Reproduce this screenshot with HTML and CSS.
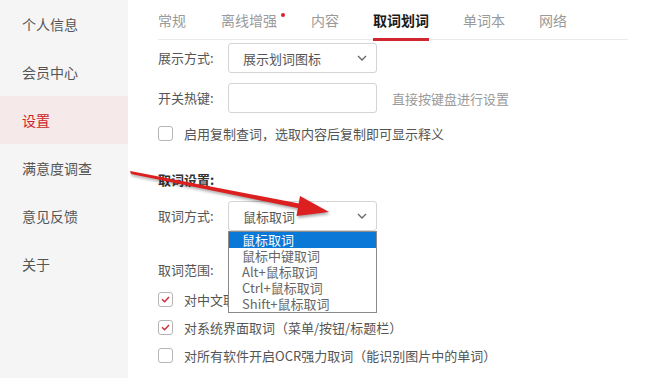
FILE: index.html
```html
<!DOCTYPE html>
<html lang="zh-CN">
<head>
<meta charset="utf-8">
<title>设置</title>
<link rel="stylesheet" href="styles.css">
</head>
<body>
<div class="app">
  <nav class="sidebar">
    <div class="side-item">个人信息</div>
    <div class="side-item">会员中心</div>
    <div class="side-item active">设置</div>
    <div class="side-item">满意度调查</div>
    <div class="side-item">意见反馈</div>
    <div class="side-item">关于</div>
  </nav>
  <main class="main">
    <div class="tabs">
      <div class="tab">常规</div>
      <div class="tab dot">离线增强</div>
      <div class="tab">内容</div>
      <div class="tab active">取词划词</div>
      <div class="tab">单词本</div>
      <div class="tab">网络</div>
    </div>

    <div class="row row-first">
      <div class="label">展示方式:</div>
      <div class="select">
        <span>展示划词图标</span>
        <svg class="chev" width="10" height="6" viewBox="0 0 10 6"><path d="M1 1l4 4 4-4" fill="none" stroke="#666" stroke-width="1.3"/></svg>
      </div>
    </div>

    <div class="row">
      <div class="label">开关热键:</div>
      <div class="input"></div>
      <div class="hint">直接按键盘进行设置</div>
    </div>

    <div class="check-row cr-first">
      <span class="box"></span>
      <span>启用复制查词，选取内容后复制即可显示释义</span>
    </div>

    <div class="section-title">取词设置:</div>

    <div class="row row-pick">
      <div class="label">取词方式:</div>
      <div class="select-wrap">
        <div class="select">
          <span>鼠标取词</span>
          <svg class="chev" width="10" height="6" viewBox="0 0 10 6"><path d="M1 1l4 4 4-4" fill="none" stroke="#666" stroke-width="1.3"/></svg>
        </div>
        <ul class="dropdown">
          <li class="sel">鼠标取词</li>
          <li>鼠标中键取词</li>
          <li>Alt+鼠标取词</li>
          <li>Ctrl+鼠标取词</li>
          <li>Shift+鼠标取词</li>
        </ul>
      </div>
    </div>

    <div class="label range">取词范围:</div>

    <div class="checks">
      <div class="check-row">
        <span class="box checked"><svg width="9" height="7" viewBox="0 0 9 7"><path d="M1 3.2l2.6 2.5L8 1" fill="none" stroke="#c8303a" stroke-width="1.5"/></svg></span>
        <span>对中文取词</span>
      </div>
      <div class="check-row">
        <span class="box checked"><svg width="9" height="7" viewBox="0 0 9 7"><path d="M1 3.2l2.6 2.5L8 1" fill="none" stroke="#c8303a" stroke-width="1.5"/></svg></span>
        <span>对系统界面取词（菜单/按钮/标题栏）</span>
      </div>
      <div class="check-row">
        <span class="box"></span>
        <span>对所有软件开启OCR强力取词（能识别图片中的单词）</span>
      </div>
    </div>
  </main>
</div>
<svg class="arrow" width="659" height="378" viewBox="0 0 659 378">
  <polygon points="130,171 131,174 300,208.5 299,203.5" fill="#dc1f1f"/>
  <polygon points="329,212 300,196 296.5,216" fill="#dc1f1f"/>
</svg>
</body>
</html>
```

FILE: styles.css
```css
* { box-sizing: border-box; }
html, body { margin: 0; padding: 0; }
body {
  width: 659px;
  height: 378px;
  overflow: hidden;
  position: relative;
  background: #fff;
  font-family: "Noto Sans CJK SC", "Microsoft YaHei", sans-serif;
  color: #555;
}
.app {
  display: flex;
  height: 378px;
}
.sidebar {
  width: 128px;
  flex: none;
  background: #f5f5f5;
}
.side-item {
  height: 48px;
  line-height: 48px;
  padding-left: 22px;
  font-size: 14px;
  color: #555;
}
.side-item.active {
  background: #f6e9e9;
  color: #cc1f28;
}
.main {
  flex: 1;
  padding: 0 31px 0 30px;
  font-size: 13px;
}
.tabs {
  display: flex;
  height: 40px;
  border-bottom: 1px solid #ebebeb;
}
.tab {
  position: relative;
  font-size: 14px;
  line-height: 40px;
  height: 40px;
  color: #9a9a9a;
  margin-right: 34px;
}
.tab:first-child { margin-right: 35px; }
.tab.dot::after {
  content: "";
  position: absolute;
  right: -8px;
  top: 13px;
  width: 4px;
  height: 4px;
  border-radius: 50%;
  background: #d8232a;
}
.tab.active {
  color: #1a1a1a;
  font-weight: bold;
}
.tab.active::after {
  content: "";
  position: absolute;
  left: 0;
  right: 0;
  bottom: -1px;
  height: 3px;
  background: #d0282e;
}
.row {
  display: flex;
  align-items: center;
  height: 30px;
  margin-top: 10px;
}
.row-first { margin-top: 3px; }
.label {
  width: 70px;
  flex: none;
  color: #555;
  line-height: 20px;
}
.select, .input {
  width: 149px;
  height: 30px;
  border: 1px solid #d4d4d4;
  border-radius: 3px;
  background: #fff;
}
.select {
  display: flex;
  align-items: center;
  justify-content: space-between;
  padding: 0 9px 0 14px;
  color: #555;
}
.chev { display: block; }
.hint {
  margin-left: 15px;
  color: #9a9a9a;
}
.check-row {
  display: flex;
  align-items: center;
  height: 20px;
  color: #555;
}
.cr-first { margin-top: 10px; }
.box {
  width: 15px;
  height: 15px;
  flex: none;
  border: 1px solid #b5b5b5;
  border-radius: 3px;
  margin-right: 11px;
  display: flex;
  align-items: center;
  justify-content: center;
  background: #fff;
}
.box svg { display: block; }
.section-title {
  margin-top: 27px;
  line-height: 20px;
  font-weight: bold;
  color: #333;
}
.row-pick { margin-top: 11px; }
.select-wrap {
  position: relative;
}
.dropdown {
  position: absolute;
  left: 0;
  top: 30px;
  width: 149px;
  margin: 0;
  padding: 0;
  list-style: none;
  background: #fff;
  border: 1px solid #8a8a8a;
  z-index: 5;
}
.dropdown li {
  height: 16px;
  line-height: 16px;
  padding-left: 13px;
  color: #666;
  font-size: 13px;
}
.dropdown li.sel {
  background: #0a78d6;
  color: #fff;
}
.range {
  margin-top: 29px;
}
.checks {
  display: flex;
  flex-direction: column;
  gap: 8px;
  margin-top: 9px;
}
.arrow {
  position: absolute;
  left: 0;
  top: 0;
  pointer-events: none;
  filter: drop-shadow(1px 2px 1.5px rgba(0,0,0,0.35));
  z-index: 10;
}
```
